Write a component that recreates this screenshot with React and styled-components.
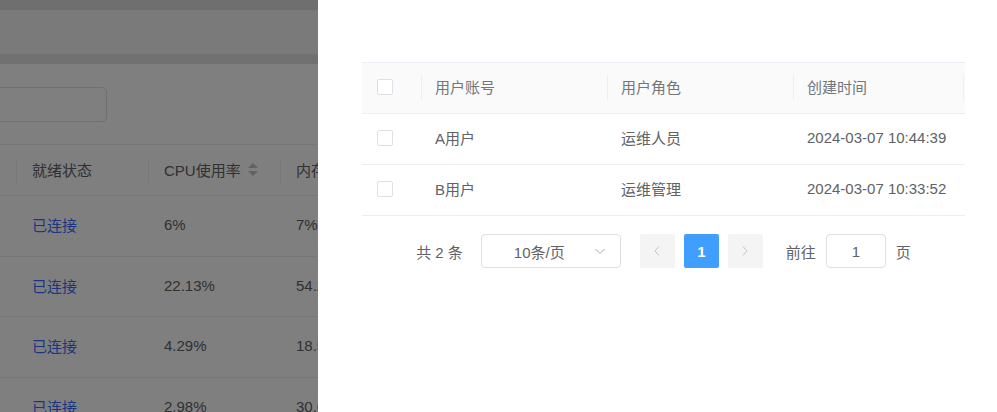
import React from "react";
import styled, { createGlobalStyle } from "styled-components";

const GlobalStyle = createGlobalStyle`
  html, body {
    margin: 0;
    height: 100%;
    overflow: hidden;
    background: #fff;
  }
  body {
    font-family: "Liberation Sans", "Noto Sans CJK SC", sans-serif;
    font-size: 15px;
    color: #606266;
  }
`;

const bgColumns = [
  { title: "", width: 136 },
  { title: "就绪状态", width: 132 },
  { title: "CPU使用率", width: 132, sortable: true },
  { title: "内存使用率", width: 132 },
  { title: "磁盘使用率", width: 132 },
];

const bgRows = [
  ["", "已连接", "6%", "7%", "12%"],
  ["", "已连接", "22.13%", "54.2%", "31%"],
  ["", "已连接", "4.29%", "18.5%", "20%"],
  ["", "已连接", "2.98%", "30.6%", "25%"],
];

const users = [
  { account: "A用户", role: "运维人员", time: "2024-03-07 10:44:39" },
  { account: "B用户", role: "运维管理", time: "2024-03-07 10:33:52" },
];

const ChevronDown = () => (
  <svg width="12" height="12" viewBox="0 0 12 12">
    <polyline points="1.5,4 6,8.5 10.5,4" fill="none" stroke="#a8abb2" strokeWidth="1" />
  </svg>
);

const ChevronLeft = () => (
  <svg width="10" height="12" viewBox="0 0 10 12">
    <polyline points="7,1.5 3,6 7,10.5" fill="none" stroke="#c0c4cc" strokeWidth="1" />
  </svg>
);

const ChevronRight = () => (
  <svg width="10" height="12" viewBox="0 0 10 12">
    <polyline points="3,1.5 7,6 3,10.5" fill="none" stroke="#c0c4cc" strokeWidth="1" />
  </svg>
);

const App = () => {
  return (
    <>
      <GlobalStyle />
      <Page>
        <TopStrip />
        <NavBar />
        <Band />
        <Content>
          <SearchInput />
          <BgTable>
            <BgHeadRow>
              {bgColumns.map((c, i) => (
                <BgHeadCell key={i} $w={c.width} $divider={i > 0}>
                  {c.title}
                  {c.sortable && (
                    <Caret>
                      <CaretUp />
                      <CaretDown />
                    </Caret>
                  )}
                </BgHeadCell>
              ))}
            </BgHeadRow>
            {bgRows.map((r, ri) => (
              <BgRow key={ri}>
                {r.map((v, ci) => (
                  <BgCell key={ci} $w={bgColumns[ci].width} $link={ci === 1}>
                    {v}
                  </BgCell>
                ))}
              </BgRow>
            ))}
          </BgTable>
        </Content>
      </Page>

      <Mask />

      <Drawer>
        <TableWrap>
          <UserTable>
            <colgroup>
              <col style={{ width: 59 }} />
              <col style={{ width: 186 }} />
              <col style={{ width: 186 }} />
              <col style={{ width: 170 }} />
              <col style={{ width: 160 }} />
            </colgroup>
            <thead>
              <tr>
                <Th>
                  <CheckBox />
                </Th>
                <Th $divider>用户账号</Th>
                <Th $divider>用户角色</Th>
                <Th $divider>创建时间</Th>
                <Th $divider>操作</Th>
              </tr>
            </thead>
            <tbody>
              {users.map((u) => (
                <tr key={u.account}>
                  <Td>
                    <CheckBox />
                  </Td>
                  <Td>{u.account}</Td>
                  <Td>{u.role}</Td>
                  <Td>{u.time}</Td>
                  <Td>编辑</Td>
                </tr>
              ))}
            </tbody>
          </UserTable>
        </TableWrap>

        <Pagination>
          <Total>共 2 条</Total>
          <SizeSelect>
            <span>10条/页</span>
            <ChevronDown />
          </SizeSelect>
          <Pager>
            <PageBtn $disabled>
              <ChevronLeft />
            </PageBtn>
            <PageBtn $active>1</PageBtn>
            <PageBtn $disabled>
              <ChevronRight />
            </PageBtn>
          </Pager>
          <Jumper>
            前往
            <JumpInput>1</JumpInput>
            页
          </Jumper>
        </Pagination>
      </Drawer>
    </>
  );
};

export default App;

/* ---------- underlying page ---------- */

const Page = styled.div`
  height: 100vh;
  overflow: hidden;
  background: #fff;
`;

const TopStrip = styled.div`
  height: 10px;
  background: #dedede;
`;

const NavBar = styled.div`
  height: 44px;
  background: #f5f5f5;
`;

const Band = styled.div`
  height: 10px;
  background: #e3e3e3;
`;

const Content = styled.div`
  margin-left: -120px;
  padding-top: 23px;
  display: flex;
  flex-direction: column;
`;

const SearchInput = styled.div`
  width: 225px;
  height: 33px;
  border: 1px solid #dcdfe6;
  border-radius: 5px;
  box-sizing: content-box;
`;

const BgTable = styled.div`
  margin-top: 22px;
  border-top: 1px solid #ebeef5;
  display: flex;
  flex-direction: column;
`;

const BgHeadRow = styled.div`
  display: flex;
  height: 50px;
  border-bottom: 1px solid #ebeef5;
`;

const BgHeadCell = styled.div`
  position: relative;
  flex: 0 0 ${(p) => p.$w}px;
  box-sizing: border-box;
  padding-left: 16px;
  padding-bottom: 1px;
  display: flex;
  align-items: center;
  color: #606266;
  white-space: nowrap;
  &::before {
    content: "";
    display: ${(p) => (p.$divider ? "block" : "none")};
    position: absolute;
    left: 0;
    top: 14px;
    bottom: 12px;
    width: 1px;
    background: #ebeef5;
  }
`;

const Caret = styled.span`
  display: inline-flex;
  flex-direction: column;
  gap: 3px;
  margin-left: 7px;
`;

const CaretUp = styled.span`
  width: 0;
  height: 0;
  border-left: 5px solid transparent;
  border-right: 5px solid transparent;
  border-bottom: 5px solid #c0c4cc;
`;

const CaretDown = styled(CaretUp)`
  border-bottom: 0;
  border-top: 5px solid #c0c4cc;
`;

const BgRow = styled.div`
  display: flex;
  height: 59.5px;
  border-bottom: 1px solid #ebeef5;
`;

const BgCell = styled.div`
  flex: 0 0 ${(p) => p.$w}px;
  box-sizing: border-box;
  padding-left: 16px;
  padding-bottom: 2px;
  display: flex;
  align-items: center;
  color: ${(p) => (p.$link ? "#3a6bff" : "#606266")};
  white-space: nowrap;
`;

/* ---------- overlay + drawer ---------- */

const Mask = styled.div`
  position: fixed;
  inset: 0;
  background: rgba(0, 0, 0, 0.5);
`;

const Drawer = styled.div`
  position: fixed;
  top: 0;
  right: 0;
  bottom: 0;
  width: 679px;
  background: #fff;
  box-sizing: border-box;
  padding: 62px 32px 0 44px;
  display: flex;
  flex-direction: column;
`;

const TableWrap = styled.div`
  width: 603px;
  overflow: hidden;
  border-top: 1px solid #ebeef5;
`;

const UserTable = styled.table`
  table-layout: fixed;
  width: 761px;
  border-collapse: collapse;
  font-size: 15px;
`;

const Th = styled.th`
  position: relative;
  height: 47px;
  padding: 0 0 3px 14px;
  background: #fafafa;
  border-bottom: 1px solid #ebeef5;
  text-align: left;
  font-weight: normal;
  color: #73767a;
  white-space: nowrap;
  &::before {
    content: "";
    display: ${(p) => (p.$divider ? "block" : "none")};
    position: absolute;
    left: 0;
    top: 12px;
    bottom: 13px;
    width: 1px;
    background: #ebeef5;
  }
`;

const Td = styled.td`
  height: 47px;
  padding: 0 0 3px 14px;
  border-bottom: 1px solid #ebeef5;
  color: #606266;
  white-space: nowrap;
`;

const CheckBox = styled.span`
  display: block;
  width: 14px;
  height: 14px;
  border: 1px solid #dcdfe6;
  border-radius: 2px;
  background: #fff;
  margin-left: 1px;
`;

const Pagination = styled.div`
  width: 603px;
  margin-top: 18px;
  display: flex;
  align-items: center;
  justify-content: center;
  height: 34px;
  color: #606266;
  font-size: 15px;
`;

const Total = styled.span`
  margin-right: 18px;
`;

const SizeSelect = styled.div`
  width: 140px;
  height: 34px;
  box-sizing: border-box;
  border: 1px solid #dcdfe6;
  border-radius: 4px;
  display: flex;
  align-items: center;
  justify-content: space-between;
  padding: 0 14px 0 32px;
  color: #606266;
`;

const Pager = styled.div`
  display: flex;
  gap: 9px;
  margin-left: 19px;
`;

const PageBtn = styled.div`
  width: 35px;
  height: 34px;
  border-radius: 2px;
  display: flex;
  align-items: center;
  justify-content: center;
  background: ${(p) => (p.$active ? "#409eff" : "#f4f4f5")};
  color: ${(p) => (p.$active ? "#fff" : "#c0c4cc")};
  font-weight: ${(p) => (p.$active ? "bold" : "normal")};
`;

const Jumper = styled.div`
  margin-left: 23px;
  display: flex;
  align-items: center;
  gap: 10px;
`;

const JumpInput = styled.div`
  width: 60px;
  height: 34px;
  box-sizing: border-box;
  border: 1px solid #dcdfe6;
  border-radius: 4px;
  display: flex;
  align-items: center;
  justify-content: center;
  color: #606266;
`;
